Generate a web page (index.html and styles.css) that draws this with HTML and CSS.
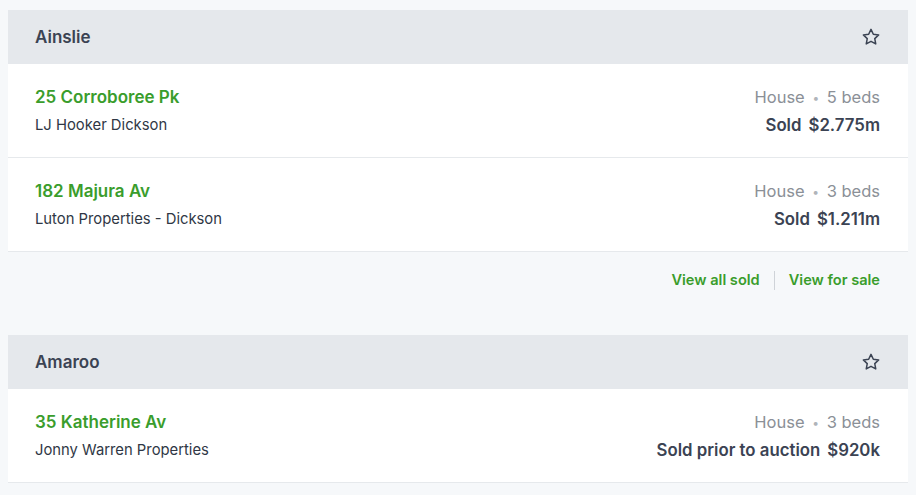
FILE: index.html
```html
<!DOCTYPE html>
<html>
<head>
<meta charset="utf-8">
<link rel="stylesheet" href="styles.css">
</head>
<body>
<div class="page">
  <section class="suburb">
    <div class="suburb-head">
      <span class="suburb-name">Ainslie</span>
      <svg class="star" viewBox="0 0 24 24" width="20" height="20"><path d="M12 2.8l2.8 5.9 6.4.8-4.7 4.4 1.2 6.4L12 17.2l-5.7 3.1 1.2-6.4-4.7-4.4 6.4-.8z" fill="none" stroke="#3b4353" stroke-width="1.8" stroke-linejoin="round"/></svg>
    </div>
    <div class="listing">
      <div class="left">
        <a class="address">25 Corroboree Pk</a>
        <span class="agent">LJ Hooker Dickson</span>
      </div>
      <div class="right">
        <span class="meta">House <span class="dot">•</span> 5 beds</span>
        <span class="price"><span class="status">Sold</span><span>$2.775m</span></span>
      </div>
    </div>
    <div class="listing">
      <div class="left">
        <a class="address">182 Majura Av</a>
        <span class="agent">Luton Properties - Dickson</span>
      </div>
      <div class="right">
        <span class="meta">House <span class="dot">•</span> 3 beds</span>
        <span class="price"><span class="status">Sold</span><span>$1.211m</span></span>
      </div>
    </div>
    <div class="links">
      <a class="link">View all sold</a>
      <span class="sep"></span>
      <a class="link">View for sale</a>
    </div>
  </section>
  <section class="suburb">
    <div class="suburb-head">
      <span class="suburb-name">Amaroo</span>
      <svg class="star" viewBox="0 0 24 24" width="20" height="20"><path d="M12 2.8l2.8 5.9 6.4.8-4.7 4.4 1.2 6.4L12 17.2l-5.7 3.1 1.2-6.4-4.7-4.4 6.4-.8z" fill="none" stroke="#3b4353" stroke-width="1.8" stroke-linejoin="round"/></svg>
    </div>
    <div class="listing">
      <div class="left">
        <a class="address">35 Katherine Av</a>
        <span class="agent">Jonny Warren Properties</span>
      </div>
      <div class="right">
        <span class="meta">House <span class="dot">•</span> 3 beds</span>
        <span class="price"><span class="status">Sold prior to auction</span><span>$920k</span></span>
      </div>
    </div>
  </section>
</div>
</body>
</html>
```
FILE: styles.css
```css
* { box-sizing: border-box; }
html, body { margin: 0; padding: 0; }
body {
  background: #f6f8fa;
  font-family: Inter, "Noto Sans", sans-serif;
  color: #3c4556;
}
.page {
  padding: 10px 8px 0 8px;
  width: 916px;
}
.suburb {
  width: 900px;
  margin-bottom: 30px;
}
.suburb-head {
  height: 54px;
  background: #e5e8ec;
  display: flex;
  align-items: center;
  justify-content: space-between;
  padding: 0 27px 0 27px;
}
.suburb-name {
  font-size: 17px;
  font-weight: 600;
  color: #3b4353;
}
.star { display: block; }
.listing {
  height: 94px;
  background: #fff;
  border-bottom: 1px solid #e6e9ec;
  display: flex;
  justify-content: space-between;
  align-items: center;
  padding: 0 28px 0 27px;
}
.left, .right {
  display: flex;
  flex-direction: column;
  gap: 5px;
}
.right { align-items: flex-end; }
.address {
  font-size: 17px;
  font-weight: 600;
  color: #3a9d2c;
  line-height: 22px;
}
.agent {
  font-size: 14.8px;
  color: #2f3745;
  line-height: 22px;
  padding-top: 1px;
}
.meta {
  font-size: 16.5px;
  color: #8b9097;
  line-height: 22px;
}
.dot { color: #b0b4ba; font-size: 12px; padding: 0 3px; vertical-align: 1px; }
.price {
  font-size: 16.8px;
  font-weight: 600;
  color: #3b4353;
  line-height: 22px;
  display: flex;
  gap: 7px;
}
.links {
  height: 53px;
  display: flex;
  justify-content: flex-end;
  align-items: center;
  padding: 3px 28px 0 27px;
  gap: 14px;
}
.link {
  font-size: 14.6px;
  font-weight: 600;
  color: #3a9d2c;
}
.sep {
  width: 1px;
  height: 19px;
  background: #cfd3d8;
}
```
